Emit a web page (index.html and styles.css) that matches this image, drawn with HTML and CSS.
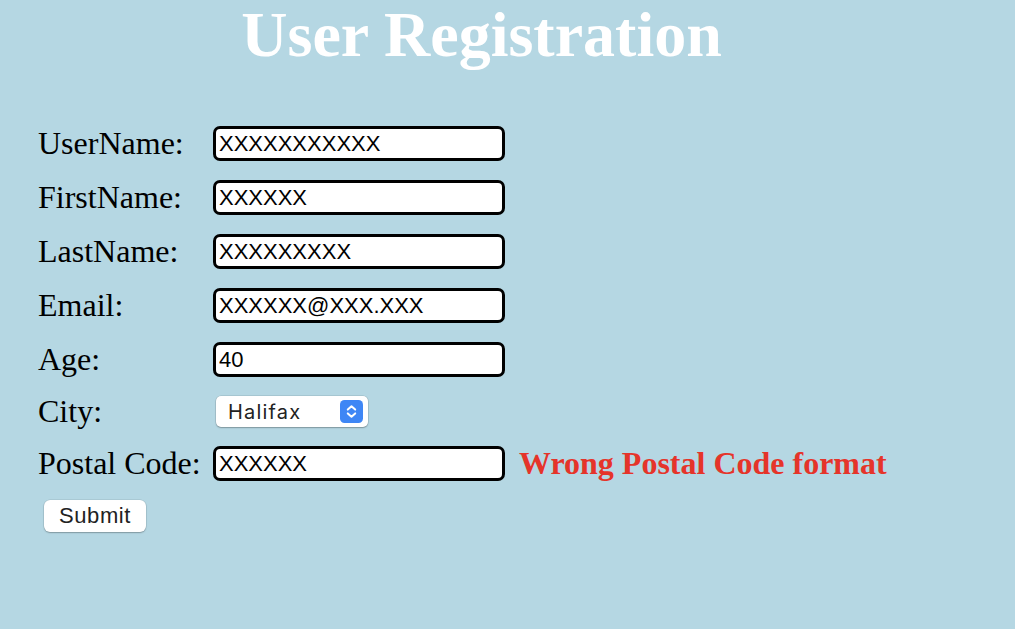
FILE: index.html
```html
<!DOCTYPE html>
<html lang="en">
<head>
<meta charset="utf-8">
<title>User Registration</title>
<link rel="stylesheet" href="styles.css">
</head>
<body>
<div class="page">
  <h1 class="title">User Registration</h1>
  <form class="reg-form">
    <label class="lbl" for="un">UserName:</label>
    <input class="field" id="un" type="text" value="XXXXXXXXXXX">
    <span></span>

    <label class="lbl" for="fn">FirstName:</label>
    <input class="field" id="fn" type="text" value="XXXXXX">
    <span></span>

    <label class="lbl" for="ln">LastName:</label>
    <input class="field" id="ln" type="text" value="XXXXXXXXX">
    <span></span>

    <label class="lbl" for="em">Email:</label>
    <input class="field" id="em" type="text" value="XXXXXX@XXX.XXX">
    <span></span>

    <label class="lbl" for="ag">Age:</label>
    <input class="field" id="ag" type="text" value="40">
    <span></span>

    <label class="lbl lbl-short" for="ct">City:</label>
    <div class="select-wrap">
      <select class="city" id="ct">
        <option>Halifax</option>
        <option>Toronto</option>
        <option>Vancouver</option>
      </select>
      <svg class="select-arrow" width="23" height="23" viewBox="0 0 23 23" aria-hidden="true">
        <rect x="0" y="0" width="23" height="23" rx="4.5" fill="#3e86f5"/>
        <path d="M7.8 9.6 L11.5 6.2 L15.2 9.6" fill="none" stroke="#fff" stroke-width="2" stroke-linecap="round" stroke-linejoin="round"/>
        <path d="M7.8 13.4 L11.5 16.8 L15.2 13.4" fill="none" stroke="#fff" stroke-width="2" stroke-linecap="round" stroke-linejoin="round"/>
      </svg>
    </div>
    <span></span>

    <label class="lbl" for="pc">Postal Code:</label>
    <input class="field" id="pc" type="text" value="XXXXXX">
    <span class="error">Wrong Postal Code format</span>

    <div class="actions">
      <button class="submit" type="button">Submit</button>
    </div>
  </form>
</div>
</body>
</html>
```

FILE: styles.css
```css
html, body {
  margin: 0;
  padding: 0;
  background: #b5d7e3;
}

body {
  font-family: "Liberation Serif", "Times New Roman", serif;
  color: #000;
}

.page {
  height: 629px;
}

.title {
  width: 963px;
  margin: 0;
  text-align: center;
  font-size: 64px;
  line-height: 69px;
  font-weight: bold;
  color: #fff;
}

.reg-form {
  margin-top: 57px;
  padding-left: 38px;
  display: grid;
  grid-template-columns: 175px 292px auto;
  column-gap: 0;
  row-gap: 19px;
  align-items: center;
}

.lbl {
  font-size: 32px;
  line-height: 35px;
}

.lbl-short {
  line-height: 31px;
}

.field {
  box-sizing: border-box;
  width: 292px;
  height: 35px;
  margin: 0;
  padding: 0 3px 0 3px;
  border: 3.5px solid #000;
  border-radius: 7px;
  background: #fff;
  font-family: "Liberation Sans", Arial, sans-serif;
  font-size: 22px;
  color: #000;
  outline: none;
}

.select-wrap {
  position: relative;
  width: 152px;
  height: 31px;
  margin-left: 3px;
}

.city {
  appearance: none;
  -webkit-appearance: none;
  box-sizing: border-box;
  width: 152px;
  height: 31px;
  margin: 0;
  padding: 0 0 0 12px;
  border: none;
  border-radius: 5px;
  background: #fff;
  box-shadow: 0 0 0 0.5px rgba(0, 0, 0, 0.15), 0 1px 1.5px rgba(0, 0, 0, 0.25);
  font-family: "Inter", "Liberation Sans", sans-serif;
  font-size: 20px;
  letter-spacing: 1.2px;
  color: #222;
  outline: none;
}

.select-arrow {
  position: absolute;
  right: 5px;
  top: 4px;
  pointer-events: none;
}

.error {
  padding-left: 14px;
  font-size: 32px;
  font-weight: bold;
  line-height: 35px;
  color: #e5342a;
  white-space: nowrap;
}

.actions {
  grid-column: 1 / -1;
}

.submit {
  box-sizing: border-box;
  width: 102px;
  height: 32px;
  margin: 0 0 0 6px;
  padding: 0;
  border: none;
  border-radius: 6px;
  background: #fff;
  box-shadow: 0 0 0 0.5px rgba(0, 0, 0, 0.12), 0 1px 1.5px rgba(0, 0, 0, 0.25);
  font-family: "Liberation Sans", Arial, sans-serif;
  font-size: 22px;
  letter-spacing: 0.6px;
  color: #222;
}
```
